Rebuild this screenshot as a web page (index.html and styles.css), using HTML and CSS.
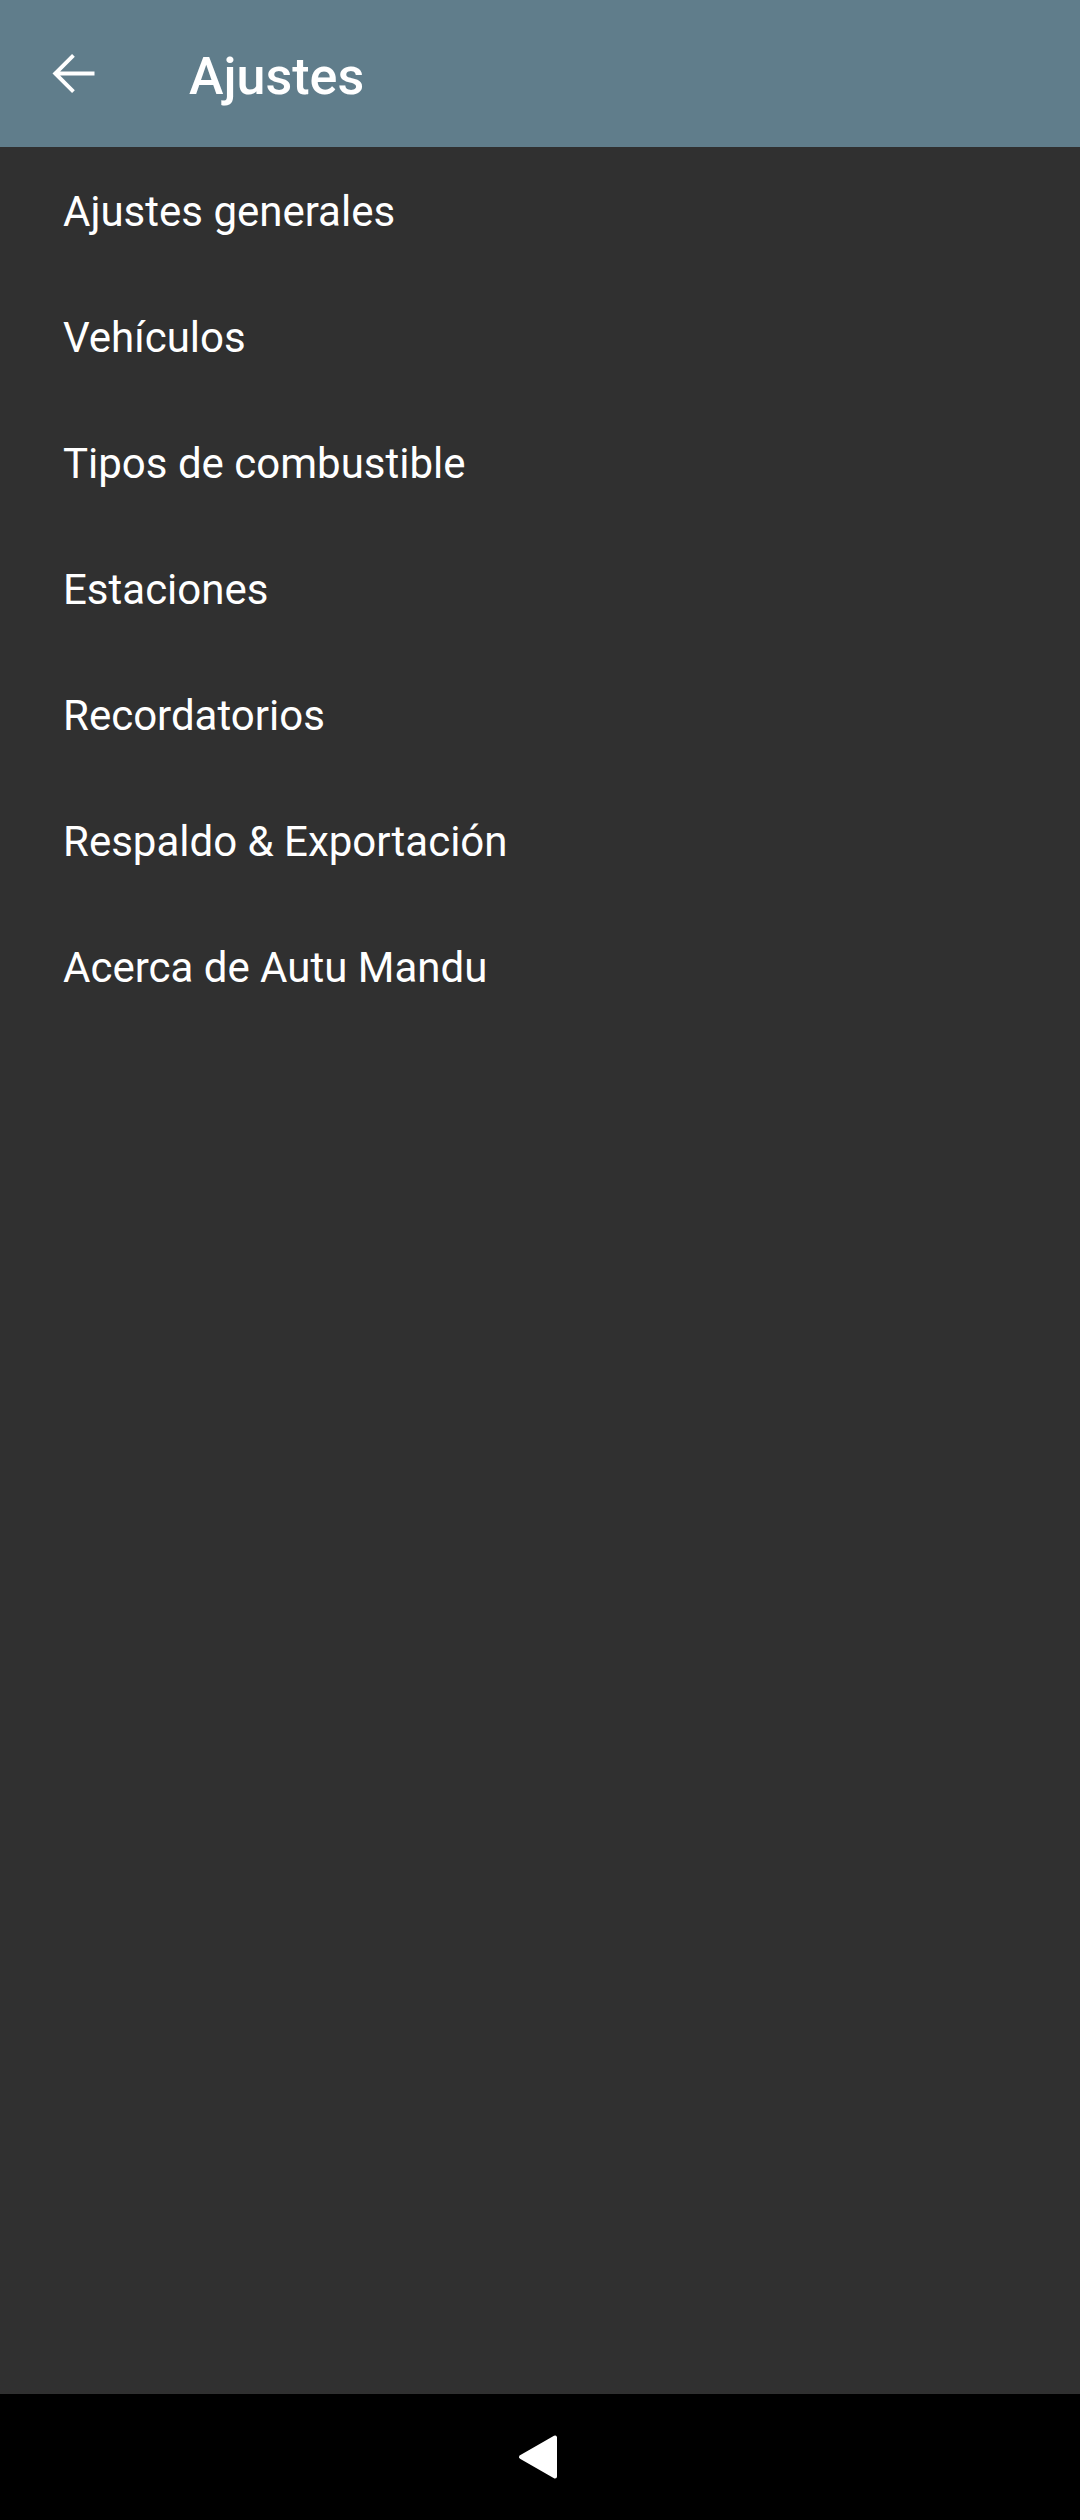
FILE: index.html
```html
<!DOCTYPE html>
<html lang="es">
<head>
<meta charset="utf-8">
<title>Ajustes</title>
<link rel="stylesheet" href="styles.css">
</head>
<body>
<div class="screen">
  <header class="appbar">
    <svg class="back" viewBox="0 0 24 24" width="63" height="63"><path fill="#ffffff" d="M20 11.25H6.9l5.6-5.6L11.45 4.6 4 12l7.45 7.4 1.05-1.05-5.6-5.6H20z"/></svg>
    <h1 class="title">Ajustes</h1>
  </header>
  <main class="list">
    <div class="item">Ajustes generales</div>
    <div class="item">Vehículos</div>
    <div class="item">Tipos de combustible</div>
    <div class="item">Estaciones</div>
    <div class="item">Recordatorios</div>
    <div class="item">Respaldo &amp; Exportación</div>
    <div class="item">Acerca de Autu Mandu</div>
  </main>
  <nav class="navbar">
    <svg class="navback" viewBox="0 0 40 46" width="40" height="46"><polygon points="3,23 37,3.5 37,42.5" fill="#ffffff" stroke="#ffffff" stroke-width="4" stroke-linejoin="round"/></svg>
  </nav>
</div>
</body>
</html>
```
FILE: styles.css
```css
* { box-sizing: border-box; }
html, body {
  margin: 0;
  padding: 0;
  background: #303030;
}
.screen {
  width: 1080px;
  height: 2520px;
  display: flex;
  flex-direction: column;
  font-family: Roboto, "Noto Sans", sans-serif;
  color: #ffffff;
}
.appbar {
  height: 147px;
  flex: none;
  background: #607d8b;
  display: flex;
  align-items: center;
}
.back {
  margin-left: 42px;
  flex: none;
}
.title {
  margin: 0 0 0 84px;
  padding-top: 5px;
  font-size: 52px;
  font-weight: 500;
  line-height: 61px;
}
.list {
  flex: 1;
  padding-top: 2px;
  background: #303030;
}
.item {
  height: 126px;
  line-height: 126px;
  padding-left: 63px;
  font-size: 42px;
  font-weight: 400;
}
.navbar {
  height: 126px;
  flex: none;
  background: #000000;
  display: flex;
  align-items: center;
  justify-content: center;
}
.navback {
  margin-left: -4px;
}
```
